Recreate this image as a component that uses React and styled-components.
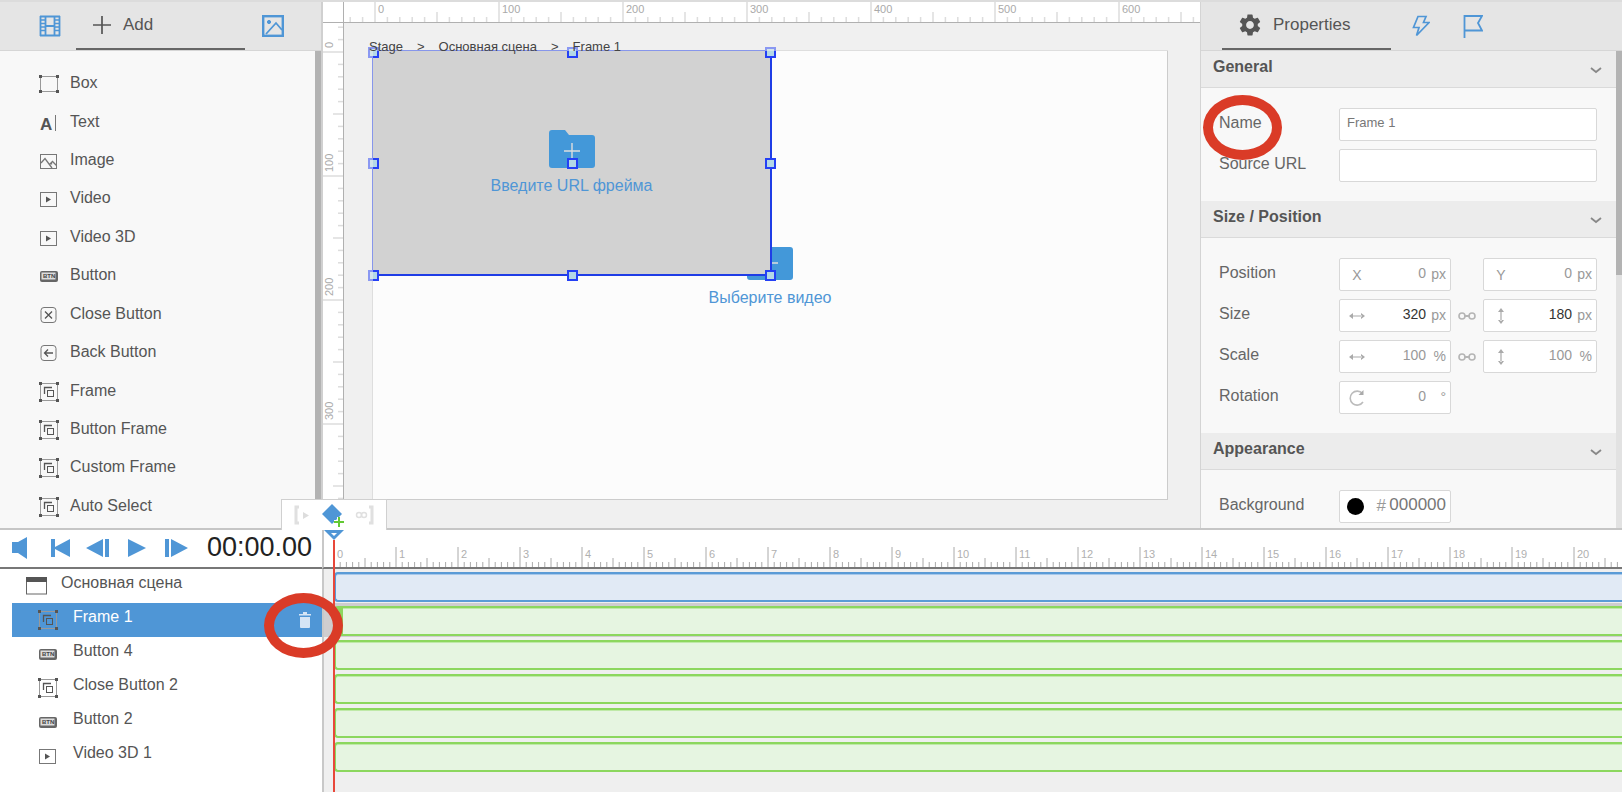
import React, { useEffect, useRef, useState } from "react";
import styled, { createGlobalStyle } from "styled-components";
import { MdSettings } from "react-icons/md";

const blue = "#4f96d6";
const dark = "#555";

const GlobalStyle = createGlobalStyle`
    * {
        box-sizing: border-box;
    }

    body {
        margin: 0;
        font-family: "Liberation Sans", Arial, sans-serif;
        font-size: 16px;
        color: ${dark};
        background: #f0f0f0;
    }

    button, input {
        font: inherit;
        color: inherit;
        border: 0;
        padding: 0;
        margin: 0;
        background: none;
    }

    svg {
        display: block;
        flex: none;
    }
`;

const Page = styled.div`
    display: flex;
    flex-direction: column;
    height: 100vh;
    min-width: 1100px;
    overflow: hidden;
    border-top: 2px solid #dcdcdc;
`;

const Workspace = styled.div`
    flex: 1;
    min-height: 0;
    display: grid;
    grid-template-columns: 321px 1fr 422px;
`;

const Panel = styled.aside`
    display: flex;
    flex-direction: column;
    min-height: 0;
    overflow: hidden;
    background: #f8f8f8;
    border-left: ${props => props.$bordered ? "1px solid #d4d4d4" : "0"};
`;

const Tabs = styled.div`
    display: flex;
    flex: none;
    height: 49px;
    padding-left: ${props => props.$inset || 0}px;
    background: #e5e5e5;
    border-bottom: 1px solid #d6d6d6;
`;

const ActiveTab = styled.button`
    display: flex;
    align-items: center;
    gap: 10px;
    width: 169px;
    padding: 0 15px;
    font-size: 17px;
    border-bottom: 2px solid #666;
`;

const IconTab = styled.button`
    display: flex;
    align-items: center;
    justify-content: center;
    width: ${props => props.$width}px;
    padding-left: ${props => props.$inset || 0}px;
    color: ${blue};
`;

const PanelBody = styled.div`
    display: flex;
    flex: 1;
    min-height: 0;
`;

const Scrollbar = styled.div`
    flex: none;
    width: 6px;
    background: ${props => props.$full ? "#b5b5b5" : "#e2e2e2"};

    &::before {
        content: "";
        display: block;
        height: ${props => props.$full ? "100%" : "47%"};
        background: #b3b3b3;
    }
`;

const ItemList = styled.ul`
    flex: 1;
    display: flex;
    flex-direction: column;
    list-style: none;
    margin: 0;
    padding: 14px 0 2px;

    li {
        flex: 1;
        display: flex;
    }

    button {
        flex: 1;
        display: flex;
        align-items: center;
        gap: 11px;
        padding-left: 39px;
    }

    span {
        padding-bottom: 2px;
    }
`;

const Center = styled.main`
    display: grid;
    grid-template-columns: 21px 1fr;
    grid-template-rows: 21px 1fr;
    min-width: 0;
    min-height: 0;
    overflow: hidden;
    border-left: 2px solid #d0d0d0;
`;

const RulerBox = styled.div`
    background: #fff;
    overflow: hidden;
    min-width: 0;
    min-height: 0;
    border-right: ${props => props.$side ? "1px solid #b0b0b0" : "0"};
    border-bottom: ${props => props.$top ? "1px solid #b0b0b0" : "0"};
`;

const Canvas = styled.div`
    position: relative;
    overflow: hidden;
    background: #f0f0f0;
`;

const Stage = styled.div`
    position: absolute;
    left: 28px;
    top: 27px;
    width: 796px;
    height: 450px;
    display: flex;
    align-items: center;
    justify-content: center;
    background: #fcfcfc;
    border: 1px solid #ccc;
`;

/* everything outside of the stage is faded a little */
const StageFade = styled.div`
    position: absolute;
    left: 29px;
    top: 28px;
    width: 796px;
    height: 450px;
    box-shadow: 0 0 0 60px rgba(240, 240, 240, 0.5);
    pointer-events: none;
`;

const FrameBox = styled.div`
    position: absolute;
    left: 28px;
    top: 27px;
    width: 400px;
    height: 226px;
    display: flex;
    align-items: center;
    justify-content: center;
    background: #d2d2d2;
    border: 2px solid #1f3de6;
    border-width: 1px 2px 2px 1px;
`;

const Handle = styled.i`
    position: absolute;
    left: ${props => props.$x}px;
    top: ${props => props.$y}px;
    width: 11px;
    height: 11px;
    background: #b4d8e6;
    border: 2px solid #2440f5;
`;

const Placeholder = styled.button`
    display: flex;
    flex-direction: column;
    align-items: center;
    gap: 8px;
    font-size: 16px;
    line-height: 20px;
    color: ${blue};
`;

const Breadcrumbs = styled.nav`
    position: absolute;
    left: 25px;
    top: 16px;
    display: flex;
    gap: 14px;
    font-size: 13px;
    line-height: 16px;
    color: #444;

    a {
        color: inherit;
        text-decoration: none;
    }
`;

const SectionHeader = styled.button`
    display: flex;
    align-items: center;
    justify-content: space-between;
    width: 100%;
    height: 37px;
    padding: 0 14px 0 12px;
    font-weight: bold;
    text-align: left;
    background: #ececec;
    border-bottom: 1px solid #dadada;

    span {
        padding-bottom: 4px;
    }
`;

const Sections = styled.div`
    flex: 1;
    min-width: 0;
    overflow: hidden;
`;

const Fields = styled.div`
    display: flex;
    flex-direction: column;
    gap: 8px;
    padding: 20px 19px 19px 18px;
`;

const FieldRow = styled.div`
    display: grid;
    grid-template-columns: 120px 112px 1fr 114px;
    align-items: center;
    color: #666;
`;

const FieldName = styled.label`
    position: relative;
    justify-self: start;
    padding-bottom: 4px;
`;

const Marker = styled.span`
    position: absolute;
    left: 50%;
    top: 50%;
    width: 79px;
    height: 65px;
    margin: ${props => props.$below ? "-27px 0 0 -41px" : "-30px 0 0 -37px"};
    border: 10px solid #da3b27;
    border-radius: 50%;
    pointer-events: none;
    z-index: 5;
`;

const TextInput = styled.input`
    && {
        grid-column: 2 / 5;
        height: 33px;
        min-width: 0;
        padding: 0 7px 5px;
        font-size: 13px;
        color: #777;
        background: #fff;
        border: 1px solid #d8d8d8;
        border-radius: 2px;
    }
`;

const NumberBox = styled.div`
    display: flex;
    align-items: center;
    gap: ${props => props.$big ? 2 : 4}px;
    height: 33px;
    padding: 0 4px 0 5px;
    font-size: ${props => props.$big ? 17 : 14}px;
    color: #999;
    background: #fff;
    border: 1px solid #d8d8d8;
    border-radius: 2px;

    input {
        flex: 1;
        width: 0;
        padding-bottom: 4px;
        text-align: right;
        color: ${props => props.$strong ? "#333" : props.$big ? "#777" : "#999"};
    }
`;

const BoxIcon = styled.span`
    display: flex;
    justify-content: center;
    width: 24px;
`;

const Unit = styled.span`
    width: 16px;
    padding-bottom: 2px;
    text-align: right;
`;

const LinkButton = styled.button`
    justify-self: center;
`;

const Swatch = styled.span`
    width: 17px;
    height: 17px;
    margin: 0 4px 0 2px;
    border-radius: 50%;
    background: #000;
`;

const Timeline = styled.section`
    position: relative;
    flex: none;
    display: grid;
    grid-template-columns: 322px 1fr;
    border-top: 2px solid #c6c6c6;
    background: #fff;
`;

const KeyTools = styled.div`
    position: absolute;
    left: 281px;
    bottom: 100%;
    display: flex;
    align-items: center;
    justify-content: space-between;
    width: 106px;
    height: 31px;
    padding: 0 11px;
    background: #fff;
    border: 1px solid #d0d0d0;
    border-bottom: 0;
`;

const Transport = styled.div`
    display: flex;
    align-items: center;
    height: 39px;
    padding: 0 0 2px 12px;
    border-bottom: 2px solid #777;
    color: ${blue};
`;

const Controls = styled.div`
    display: grid;
    grid-template-columns: 38px 36px 40px 38px 43px;
    align-items: center;
`;

const Time = styled.time`
    font-size: 27px;
    color: #222;
`;

const TimeRuler = styled.div`
    height: 39px;
    overflow: hidden;
    border-left: 2px solid #c8c8c8;
    border-bottom: 2px solid #777;
`;

const Layers = styled.ul`
    list-style: none;
    margin: 0;
    padding: 0 0 19px 12px;
`;

const Layer = styled.li`
    display: flex;
    align-items: center;
    gap: ${props => props.$root ? 14 : 15}px;
    height: 34px;
    padding-left: ${props => props.$root ? 14 : 26}px;
    color: ${props => props.$selected ? "#fff" : dark};
    background: ${props => props.$selected ? blue : "none"};

    > span {
        flex: 1;
        padding-bottom: 6px;
    }
`;

const DeleteButton = styled.button`
    position: relative;
    margin-right: 11px;
`;

const Tracks = styled.div`
    overflow: hidden;
    min-width: 0;
    background: #efefef;
    border-left: 2px solid #c8c8c8;
`;

const TrackRow = styled.div`
    height: 34px;
    padding: 3px 0 1px 10px;
    background: ${props => props.$selected ? "#cfcdcf" : "none"};
`;

const Track = styled.div`
    height: 30px;
    border: 2px solid ${props => props.$root ? "#5a9bd6" : "#8cd75e"};
    border-right: 0;
    border-left-width: ${props => props.$selected ? 9 : 2}px;
    border-radius: 4px 0 0 4px;
    background: ${props => props.$root ? "#e1eaf5" : "#e6f5e1"};
    box-shadow: inset 0 1px 0 ${props => props.$root ? "#a6c8ea" : "#bfe9a8"};
`;

const Playhead = styled.div`
    position: absolute;
    left: 323px;
    top: 0;
    bottom: 0;
    width: 21px;
    display: flex;
    flex-direction: column;
    align-items: center;
    pointer-events: none;

    &::after {
        content: "";
        flex: 1;
        width: 2px;
        background: #e8473a;
    }
`;

const FilmIcon = () => (
    <svg width="22" height="22" viewBox="0 0 22 22" fill="none" stroke="currentColor">
        <path d="M1.5 1v20M20.5 1v20M6.5 1v20M15.5 1v20" strokeWidth="1.8" />
        <path d="M1 1.5h20M1 20.5h20M6 11h10" strokeWidth="2.2" />
        <path d="M1 5h5M1 8.5h5M1 12h5M1 15.5h5M16 5h5M16 8.5h5M16 12h5M16 15.5h5" strokeWidth="1.5" />
    </svg>
);

const PictureIcon = () => (
    <svg width="22" height="22" viewBox="0 0 22 22" fill="none" stroke="currentColor" strokeWidth="2.4">
        <rect x="1.2" y="1.2" width="19.6" height="19.6" />
        <circle cx="7" cy="7" r="1.6" fill="currentColor" strokeWidth="1" />
        <path d="M4 19l10-11 6 7" strokeWidth="1.8" />
    </svg>
);

const PlusIcon = () => (
    <svg width="22" height="18" viewBox="0 0 22 18" stroke="currentColor" strokeWidth="1.7">
        <path d="M11 0v18M2 9h18" />
    </svg>
);

const BoltIcon = () => (
    <svg width="18" height="22" viewBox="0 0 18 22" fill="none" stroke="currentColor" strokeWidth="1.7">
        <path d="M6 1.5h8l-2.500 6H17L4.500 20.500L7 12.500H1.500z" />
    </svg>
);

const FlagIcon = () => (
    <svg width="20" height="24" viewBox="0 0 20 24" fill="none" stroke="currentColor" strokeWidth="1.8">
        <path d="M1.500 24V2H19l-4 7 4 7.500H1.500" />
    </svg>
);

const Corners = ({ h }) => (
    <g>
        <rect x="1.500" y="1.500" width="17" height={h - 3} fill="none" stroke="#999" />
        <path fill={dark} stroke="none" d={`M0 0h3v3H0zM17 0h3v3h-3zM0 ${h - 3}h3v3H0zM17 ${h - 3}h3v3h-3z`} />
    </g>
);

const ItemIcon = ({ type }) => {
    const svg = { width: 20, height: 20, viewBox: "0 0 20 20", fill: "none", stroke: "#777" };
    switch (type) {
        case "box":
            return <svg {...svg} height="18" viewBox="0 0 20 18"><Corners h={18} /></svg>;
        case "text":
            return (
                <svg {...svg}>
                    <text x="1" y="17" fontSize="17" fontWeight="bold" fill={dark} stroke="none">A</text>
                    <path d="M16.500 2v16" />
                </svg>
            );
        case "image":
            return (
                <svg {...svg}>
                    <rect x="1.500" y="3.500" width="16" height="14" />
                    <path d="M2 12l4-4.500L13 17M10.500 13.500l3-3 4 4M12.500 13.500v-1.500" strokeWidth="1.300" />
                </svg>
            );
        case "video":
            return (
                <svg {...svg}>
                    <rect x="1.500" y="3.500" width="16" height="14" />
                    <path d="M7 7.500l5 3-5 3z" fill={dark} stroke="none" />
                </svg>
            );
        case "button":
            return (
                <svg {...svg}>
                    <rect x="1" y="5" width="18" height="11" rx="2" fill="#666" stroke="none" />
                    <rect x="2.500" y="6.500" width="14" height="7" fill="#ddd" stroke="none" />
                    <text x="4" y="12" fontSize="6" fontWeight="bold" fill="#444" stroke="none">BTN</text>
                </svg>
            );
        case "close":
            return (
                <svg {...svg}>
                    <rect x="2" y="2.500" width="15" height="15" rx="3" />
                    <path d="M6 6.500l7 7M13 6.500l-7 7" stroke={dark} strokeWidth="1.300" />
                </svg>
            );
        case "back":
            return (
                <svg {...svg}>
                    <rect x="2" y="2.500" width="15" height="15" rx="3" />
                    <path d="M14 10H5.500M9 6.500L5.500 10 9 13.500" stroke={dark} strokeWidth="1.300" />
                </svg>
            );
        default:
            return (
                <svg {...svg}>
                    <Corners h={20} />
                    <path d="M5.500 12V5.500H13" stroke={dark} strokeWidth="1.300" />
                    <rect x="8.500" y="8.500" width="6" height="6" stroke={dark} />
                </svg>
            );
    }
};

const WindowIcon = () => (
    <svg width="21" height="18" viewBox="0 0 21 18">
        <rect x="0.500" y="0.500" width="20" height="16.500" fill="#fff" stroke="#666" />
        <path d="M0 0h21v5H0z" fill={dark} />
    </svg>
);

const FolderIcon = () => (
    <svg width="46" height="38" viewBox="0 0 46 38">
        <path fill="#4398d9" d="M3 0h13l4 5h23a3 3 0 0 1 3 3v27a3 3 0 0 1-3 3H3a3 3 0 0 1-3-3V3a3 3 0 0 1 3-3z" />
        <path d="M23 13v16M15 21h16" stroke="#ddd" strokeWidth="1.400" />
    </svg>
);

const ArrowsIcon = ({ vertical }) => (
    <svg width="18" height="18" viewBox="0 0 18 18" fill="#aaa">
        <g transform={vertical ? "rotate(90 9 9)" : undefined}>
            <path d="M1 9l4-3v6zM17 9l-4-3v6zM4 8.400h10v1.200H4z" />
        </g>
    </svg>
);

const RotateIcon = () => (
    <svg width="18" height="18" viewBox="0 0 18 18" fill="none" stroke="#bbb" strokeWidth="1.600">
        <path d="M15 13a7 7 0 1 1-.5-8.500" />
        <path d="M15.500 1v5h-5z" fill="#aaa" stroke="none" />
    </svg>
);

const LinkIcon = () => (
    <svg width="18" height="10" viewBox="0 0 18 10" fill="none" stroke="#b5b5b5" strokeWidth="1.600">
        <circle cx="4" cy="5" r="3" />
        <circle cx="14" cy="5" r="3" />
        <path d="M6 5h6" strokeWidth="2" />
    </svg>
);

const ChevronIcon = () => (
    <svg width="12" height="18" viewBox="0 0 12 18" fill="none" stroke="#888" strokeWidth="1.800">
        <path d="M1 8l5 4 5-4" />
    </svg>
);

const TrashIcon = () => (
    <svg width="12" height="17" viewBox="0 0 12 17" fill="#d5e5f5">
        <path d="M0 2h4V0h4v2h4v1.500H0zM1 5h10v10a1 1 0 0 1-1 1H2a1 1 0 0 1-1-1z" />
    </svg>
);

// size of a ruler, so that no tick is made past its end
const useSize = () => {
    const ref = useRef(null);
    const [size, setSize] = useState({ width: 0, height: 0 });

    useEffect(() => {
        const measure = () => {
            const { width, height } = ref.current.getBoundingClientRect();
            setSize({ width, height });
        };
        measure();
        window.addEventListener("resize", measure);
        return () => window.removeEventListener("resize", measure);
    }, []);

    return [ref, size];
};

const RULER_STEP = 12.4;

// one tick for every 10 units, a label for every 100
const StageRuler = ({ vertical, start }) => {
    const [ref, size] = useSize();
    const end = vertical ? size.height : size.width;
    const ticks = [];
    for (let i = -2; start + i * RULER_STEP < end; i++) {
        const pos = start + i * RULER_STEP;
        const from = i % 10 === 0 ? 0 : i % 5 === 0 ? 10 : 15;
        ticks.push(vertical
            ? <path key={i} d={`M${from} ${pos}H20`} />
            : <path key={i} d={`M${pos} ${from}V20`} />);
        if (i >= 0 && i % 10 === 0 && pos + 24 < end) {
            ticks.push(
                <text key={`t${i}`} fill="#aaa" stroke="none" fontSize="11"
                    transform={vertical ? `translate(10 ${pos - 4}) rotate(-90)` : `translate(${pos + 3} 11)`}>
                    {i * 10}
                </text>
            );
        }
    }
    return <svg ref={ref} width="100%" height="100%" stroke="#ddd" strokeWidth="1.500">{ticks}</svg>;
};

const SECOND = 62;

const SecondsRuler = () => {
    const [ref, size] = useSize();
    const ticks = [];
    for (let i = 0; 10 + (i * SECOND) / 10 < size.width; i++) {
        const x = 10 + (i * SECOND) / 10;
        const from = i % 10 === 0 ? 17 : i % 5 === 0 ? 28 : 32;
        ticks.push(<path key={i} d={`M${x} ${from}V37`} />);
        if (i % 10 === 0 && x + 18 < size.width) {
            ticks.push(<text key={`t${i}`} x={x + 3} y="28" fill="#b0b0b0" stroke="none" fontSize="11">{i / 10}</text>);
        }
    }
    return <svg ref={ref} width="100%" height="37" stroke="#aaa">{ticks}</svg>;
};

const items = [
    ["box", "Box"],
    ["text", "Text"],
    ["image", "Image"],
    ["video", "Video"],
    ["video", "Video 3D"],
    ["button", "Button"],
    ["close", "Close Button"],
    ["back", "Back Button"],
    ["frame", "Frame"],
    ["frame", "Button Frame"],
    ["frame", "Custom Frame"],
    ["frame", "Auto Select"],
];

const layers = [
    ["frame", "Frame 1"],
    ["button", "Button 4"],
    ["frame", "Close Button 2"],
    ["button", "Button 2"],
    ["video", "Video 3D 1"],
];

const Section = ({ title, children }) => (
    <section>
        <SectionHeader type="button">
            <span>{title}</span>
            <ChevronIcon />
        </SectionHeader>
        <Fields>{children}</Fields>
    </section>
);

const NumberField = ({ id, label, icon, value, unit, strong }) => (
    <NumberBox $strong={strong}>
        <BoxIcon>{icon}</BoxIcon>
        <input id={id} aria-label={label} defaultValue={value} />
        <Unit>{unit}</Unit>
    </NumberBox>
);

const App = () => {
    const [selected, setSelected] = useState("Frame 1");
    const [name, setName] = useState("Frame 1");

    return (
        <Page>
            <GlobalStyle />
            <Workspace>
                <Panel>
                    <Tabs>
                        <IconTab $width={76} $inset={24} aria-label="Scenes"><FilmIcon /></IconTab>
                        <ActiveTab><PlusIcon />Add</ActiveTab>
                        <IconTab $width={55} aria-label="Assets"><PictureIcon /></IconTab>
                    </Tabs>
                    <PanelBody>
                        <ItemList>
                            {items.map(([type, label]) => (
                                <li key={label}>
                                    <button type="button"><ItemIcon type={type} /><span>{label}</span></button>
                                </li>
                            ))}
                        </ItemList>
                        <Scrollbar $full />
                    </PanelBody>
                </Panel>

                <Center>
                    <RulerBox $side $top />
                    <RulerBox $top><StageRuler start={31} /></RulerBox>
                    <RulerBox $side><StageRuler vertical start={29} /></RulerBox>
                    <Canvas>
                        <Stage>
                            <Placeholder type="button"><FolderIcon />Выберите видео</Placeholder>
                        </Stage>
                        <FrameBox>
                            <Placeholder type="button"><FolderIcon />Введите URL фрейма</Placeholder>
                        </FrameBox>
                        {[24, 223, 421].map(x => [24, 135, 247].map(y => (
                            <Handle key={`${x}-${y}`} $x={x} $y={y} />
                        )))}
                        <StageFade />
                        <Breadcrumbs>
                            <a href="#stage">Stage</a>
                            <span>&gt;</span>
                            <a href="#scene">Основная сцена</a>
                            <span>&gt;</span>
                            <a href="#frame">Frame 1</a>
                        </Breadcrumbs>
                    </Canvas>
                </Center>

                <Panel $bordered>
                    <Tabs $inset={21}>
                        <ActiveTab><MdSettings size={26} />Properties</ActiveTab>
                        <IconTab $width={60} aria-label="Actions"><BoltIcon /></IconTab>
                        <IconTab $width={44} aria-label="Flags"><FlagIcon /></IconTab>
                    </Tabs>
                    <PanelBody>
                        <Sections>
                            <Section title="General">
                                <FieldRow>
                                    <FieldName htmlFor="name">Name<Marker /></FieldName>
                                    <TextInput id="name" value={name} onChange={e => setName(e.target.value)} />
                                </FieldRow>
                                <FieldRow>
                                    <FieldName htmlFor="url">Source URL</FieldName>
                                    <TextInput id="url" />
                                </FieldRow>
                            </Section>
                            <Section title="Size / Position">
                                <FieldRow>
                                    <FieldName htmlFor="x">Position</FieldName>
                                    <NumberField id="x" icon="X" value="0" unit="px" />
                                    <span />
                                    <NumberField label="Y" icon="Y" value="0" unit="px" />
                                </FieldRow>
                                <FieldRow>
                                    <FieldName htmlFor="width">Size</FieldName>
                                    <NumberField id="width" icon={<ArrowsIcon />} value="320" unit="px" strong />
                                    <LinkButton aria-label="Lock size"><LinkIcon /></LinkButton>
                                    <NumberField label="Height" icon={<ArrowsIcon vertical />} value="180" unit="px" strong />
                                </FieldRow>
                                <FieldRow>
                                    <FieldName htmlFor="scale">Scale</FieldName>
                                    <NumberField id="scale" icon={<ArrowsIcon />} value="100" unit="%" />
                                    <LinkButton aria-label="Lock scale"><LinkIcon /></LinkButton>
                                    <NumberField label="Scale Y" icon={<ArrowsIcon vertical />} value="100" unit="%" />
                                </FieldRow>
                                <FieldRow>
                                    <FieldName htmlFor="rotation">Rotation</FieldName>
                                    <NumberField id="rotation" icon={<RotateIcon />} value="0" unit="°" />
                                </FieldRow>
                            </Section>
                            <Section title="Appearance">
                                <FieldRow>
                                    <FieldName htmlFor="background">Background</FieldName>
                                    <NumberBox $big>
                                        <Swatch />
                                        <Unit>#</Unit>
                                        <input id="background" defaultValue="000000" />
                                    </NumberBox>
                                </FieldRow>
                            </Section>
                        </Sections>
                        <Scrollbar />
                    </PanelBody>
                </Panel>
            </Workspace>

            <Timeline>
                <Transport>
                    <Controls>
                        <button aria-label="Sound">
                            <svg width="16" height="22" viewBox="0 0 16 22" fill={blue}><path d="M0 5h6l9-5v22l-9-6H0z" /></svg>
                        </button>
                        <button aria-label="To start">
                            <svg width="20" height="20" viewBox="0 0 20 20" fill={blue}><path d="M1 1h4v8L20 1v18L5 11v8H1z" /></svg>
                        </button>
                        <button aria-label="Step back">
                            <svg width="24" height="20" viewBox="0 0 24 20" fill={blue}><path d="M0 10L17 1v18zM19 1h4v18h-4z" /></svg>
                        </button>
                        <button aria-label="Play">
                            <svg width="20" height="20" viewBox="0 0 20 20" fill={blue}><path d="M2 1l18 9-18 9z" /></svg>
                        </button>
                        <button aria-label="Step forward">
                            <svg width="24" height="20" viewBox="0 0 24 20" fill={blue}><path d="M24 10L7 1v18zM1 1h4v18H1z" /></svg>
                        </button>
                    </Controls>
                    <Time>00:00.00</Time>
                </Transport>
                <TimeRuler><SecondsRuler /></TimeRuler>

                <Layers>
                    <Layer $root><WindowIcon /><span>Основная сцена</span></Layer>
                    {layers.map(([type, label]) => (
                        <Layer key={label} $selected={label === selected} onClick={() => setSelected(label)}>
                            <ItemIcon type={type} />
                            <span>{label}</span>
                            {label === selected && (
                                <DeleteButton aria-label="Delete"><TrashIcon /><Marker $below /></DeleteButton>
                            )}
                        </Layer>
                    ))}
                </Layers>
                <Tracks>
                    <TrackRow><Track $root /></TrackRow>
                    {layers.map(([, label]) => (
                        <TrackRow key={label} $selected={label === selected}>
                            <Track $selected={label === selected} />
                        </TrackRow>
                    ))}
                </Tracks>

                <Playhead>
                    <svg width="20" height="10" viewBox="0 0 20 10">
                        <path d="M0 0h20L10 10z" fill={blue} />
                        <path d="M7 3h6l-3 3z" fill="#fff" />
                    </svg>
                </Playhead>
                <KeyTools>
                    <svg width="18" height="20" viewBox="0 0 18 20" fill="none" stroke="#e0e0e0" strokeWidth="3">
                        <path d="M6 2H3v16h3" />
                        <path d="M10 7l6 3.500-6 3.500z" fill="#ddd" stroke="none" />
                    </svg>
                    <svg width="22" height="24" viewBox="0 0 22 24">
                        <path d="M10 1l10 10-10 10L0 11z" fill={blue} />
                        <path d="M17 14v10M12 19h10" stroke="#fff" strokeWidth="4" />
                        <path d="M17 14v10M12 19h10" stroke="#63c934" strokeWidth="2" />
                    </svg>
                    <svg width="20" height="20" viewBox="0 0 20 20" fill="none" stroke="#e0e0e0" strokeWidth="1.500">
                        <circle cx="4" cy="10" r="2.500" />
                        <circle cx="9" cy="10" r="2.500" />
                        <path d="M14 2h3v16h-3" strokeWidth="3" />
                    </svg>
                </KeyTools>
            </Timeline>
        </Page>
    );
};

export default App;
